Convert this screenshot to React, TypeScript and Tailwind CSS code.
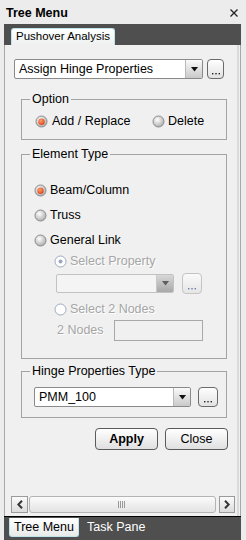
import React, { useId } from "react";

function Radio({ checked = false, disabled = false }: { checked?: boolean; disabled?: boolean }) {
  const id = useId().replace(/:/g, "");
  if (disabled) {
    return (
      <svg width="13" height="13" viewBox="0 0 13 13" className="shrink-0">
        <circle cx="6.5" cy="6.5" r="5.5" fill="#ffffff" stroke="#9ca8bf" strokeWidth="1" />
        {checked && <circle cx="6.5" cy="6.5" r="2" fill="#9aa6bd" />}
      </svg>
    );
  }
  return (
    <svg width="13" height="13" viewBox="0 0 13 13" className="shrink-0">
      <defs>
        <radialGradient id={`g${id}`} cx="40%" cy="35%" r="70%">
          <stop offset="0%" stopColor="#ffffff" />
          <stop offset="100%" stopColor="#a9a9a9" />
        </radialGradient>
        <radialGradient id={`o${id}`} cx="40%" cy="35%" r="70%">
          <stop offset="0%" stopColor="#ffa070" />
          <stop offset="100%" stopColor="#dc3f12" />
        </radialGradient>
      </defs>
      <circle cx="6.5" cy="6.5" r="5.5" fill={`url(#g${id})`} stroke="#8c8c8c" strokeWidth="1" />
      {checked && <circle cx="6.5" cy="6.8" r="3.2" fill={`url(#o${id})`} />}
    </svg>
  );
}

function Arrow({ disabled = false }: { disabled?: boolean }) {
  return (
    <div
      className={`w-[17px] h-full flex items-center justify-center border-l ${
        disabled ? "border-[#c8c8c8] bg-gradient-to-b from-[#d8d8d8] to-[#a8a8a8]" : "border-[#b9b9b9] bg-gradient-to-b from-[#fafafa] to-[#c9c9c9]"
      }`}
    >
      <svg width="7" height="5" viewBox="0 0 7 5">
        <path d="M0 0H7L3.5 4.5Z" fill={disabled ? "#5e5e5e" : "#111"} />
      </svg>
    </div>
  );
}

function Dots({ w, h, disabled = false }: { w: string; h: string; disabled?: boolean }) {
  return (
    <div
      className={`${w} ${h} rounded-[4px] border flex items-end justify-center pb-[3px] ${
        disabled
          ? "border-[#c4c4c4] bg-gradient-to-b from-[#fafafa] to-[#e6e6e6]"
          : "border-[#6a6a6a] bg-gradient-to-b from-[#ffffff] to-[#e2e2e2]"
      }`}
    >
      <svg width="8" height="2" viewBox="0 0 8 2">
        <rect x="0" y="0" width="1.4" height="1.4" fill={disabled ? "#6c7ba0" : "#222"} />
        <rect x="3.3" y="0" width="1.4" height="1.4" fill={disabled ? "#6c7ba0" : "#222"} />
        <rect x="6.6" y="0" width="1.4" height="1.4" fill={disabled ? "#6c7ba0" : "#222"} />
      </svg>
    </div>
  );
}

function Group({ label, className, children }: { label: string; className: string; children: React.ReactNode }) {
  return (
    <div className={`relative ml-[16px] w-[206px] border border-[#a3a3a3] ${className}`}>
      <span className="absolute left-[8px] top-[-9px] bg-[#f0f0f0] px-[2px] leading-[16px]">{label}</span>
      {children}
    </div>
  );
}

const dis = "text-[#a6a6a6] [text-shadow:1px_1px_0_#ffffff]";

export default function App() {
  return (
    <div className="w-[246px] h-[540px] bg-[#ececec] flex flex-col overflow-hidden text-black font-['Liberation_Sans',Arial,sans-serif] text-[12.5px] leading-none">
      {/* title */}
      <div className="h-[24px] shrink-0 flex items-center justify-between pl-[6px] pr-[8px] pt-[2px]">
        <span className="font-bold text-[12.5px]">Tree Menu</span>
        <svg width="8" height="8" viewBox="0 0 8 8">
          <path d="M0.5 0.5L7.5 7.5M7.5 0.5L0.5 7.5" stroke="#222" strokeWidth="1.3" />
        </svg>
      </div>

      <div className="ml-[4px] mr-[5px] flex-1 flex flex-col min-h-0">
        {/* top tab strip */}
        <div className="h-[21px] shrink-0 bg-[#4f4f4f] flex items-end pl-[7px]">
          <div className="h-[17px] px-[4px] flex items-center rounded-t-[3px] border border-b-0 border-[#bfe3ec] bg-gradient-to-b from-[#ffffff] to-[#eef0f0] text-[11.5px]">
            Pushover Analysis
          </div>
        </div>

        {/* content */}
        <div className="flex-1 bg-[#f0f0f0] border-x border-[#a8a8a8] flex flex-col min-h-0">
          <div className="flex-1 flex flex-col border-r-[2px] border-[#dadada] mr-[1px]">
            {/* main combo */}
            <div className="mt-[14px] ml-[9px] flex items-center gap-[4px]">
              <div className="w-[189px] h-[20px] bg-white border border-[#8a8a8a] rounded-[2px] flex items-stretch overflow-hidden">
                <div className="flex-1 flex items-center pl-[4px]">Assign Hinge Properties</div>
                <Arrow />
              </div>
              <Dots w="w-[17px]" h="h-[20px]" />
            </div>

            {/* Option */}
            <Group label="Option" className="mt-[20px] h-[41px]">
              <div className="flex items-center pl-[13px] pt-[15px]">
                <div className="w-[117px] flex items-center gap-[4px]">
                  <Radio checked />
                  <span>Add / Replace</span>
                </div>
                <div className="flex items-center gap-[3px]">
                  <Radio />
                  <span>Delete</span>
                </div>
              </div>
            </Group>

            {/* Element Type */}
            <Group label="Element Type" className="mt-[14px] h-[205px]">
              <div className="flex flex-col pl-[12px] pt-[29px]">
                <div className="h-[13px] flex items-center gap-[3px]">
                  <Radio checked />
                  <span>Beam/Column</span>
                </div>
                <div className="h-[13px] mt-[12px] flex items-center gap-[3px]">
                  <Radio />
                  <span>Truss</span>
                </div>
                <div className="h-[13px] mt-[12px] flex items-center gap-[3px]">
                  <Radio />
                  <span>General Link</span>
                </div>
                <div className={`h-[13px] mt-[8px] ml-[20px] flex items-center gap-[3px] ${dis}`}>
                  <Radio disabled checked />
                  <span>Select Property</span>
                </div>
                <div className="mt-[5px] ml-[22px] flex items-center gap-[8px]">
                  <div className="w-[118px] h-[19px] bg-[#f4f4f4] border border-[#c2c2c2] rounded-[2px] flex items-stretch overflow-hidden">
                    <div className="flex-1" />
                    <Arrow disabled />
                  </div>
                  <Dots w="w-[20px]" h="h-[21px]" disabled />
                </div>
                <div className={`h-[13px] mt-[9px] ml-[20px] flex items-center gap-[3px] ${dis}`}>
                  <Radio disabled />
                  <span>Select 2 Nodes</span>
                </div>
                <div className="mt-[4px] ml-[23px] flex items-center">
                  <span className={`w-[57px] ${dis}`}>2 Nodes</span>
                  <div className="w-[89px] h-[21px] border border-[#a8a8a8] bg-[#f0f0f0]" />
                </div>
              </div>
            </Group>

            {/* Hinge Properties Type */}
            <Group label="Hinge Properties Type" className="mt-[12px] h-[47px]">
              <div className="flex items-center pl-[12px] pt-[15px] gap-[7px]">
                <div className="w-[157px] h-[20px] bg-white border border-[#8a8a8a] rounded-[2px] flex items-stretch overflow-hidden">
                  <div className="flex-1 flex items-center pl-[4px]">PMM_100</div>
                  <Arrow />
                </div>
                <Dots w="w-[20px]" h="h-[20px]" />
              </div>
            </Group>

            {/* Buttons */}
            <div className="mt-[10px] ml-[90px] flex gap-[7px]">
              <div className="w-[63px] h-[22px] rounded-[4px] border border-[#5a5a5a] bg-gradient-to-b from-[#ffffff] to-[#e0e0e0] flex items-center justify-center font-bold">
                Apply
              </div>
              <div className="w-[63px] h-[22px] rounded-[4px] border border-[#5a5a5a] bg-gradient-to-b from-[#ffffff] to-[#e0e0e0] flex items-center justify-center">
                Close
              </div>
            </div>

            <div className="flex-1" />

            {/* Scrollbar */}
            <div className="mb-[3px] ml-[6px] w-[224px] h-[17px] flex items-stretch gap-[1px]">
              <div className="w-[17px] border border-[#9a9a9a] bg-gradient-to-b from-[#fbfbfb] to-[#dcdcdc] flex items-center justify-center">
                <svg width="6" height="9" viewBox="0 0 6 9">
                  <path d="M5 0.8L1.3 4.5L5 8.2" fill="none" stroke="#333" strokeWidth="2" />
                </svg>
              </div>
              <div className="flex-1 border border-[#b4b4b4] rounded-[3px] bg-gradient-to-b from-[#fbfbfb] to-[#e3e3e3] flex items-center justify-center mr-[2px]">
                <svg width="9" height="7" viewBox="0 0 9 7">
                  <path d="M0.5 0V7M2.5 0V7M4.5 0V7M6.5 0V7" stroke="#9a9a9a" strokeWidth="1" />
                </svg>
              </div>
              <div className="w-[16px] border border-[#9a9a9a] bg-gradient-to-b from-[#fbfbfb] to-[#dcdcdc] flex items-center justify-center">
                <svg width="6" height="9" viewBox="0 0 6 9">
                  <path d="M1 0.8L4.7 4.5L1 8.2" fill="none" stroke="#333" strokeWidth="2" />
                </svg>
              </div>
            </div>
          </div>
        </div>

        {/* bottom tab strip */}
        <div className="h-[24px] shrink-0 border-t border-black bg-[#4f4f4f] flex items-start pl-[5px] pt-[1px]">
          <div className="h-[19px] px-[4px] flex items-center rounded-b-[3px] border border-t-0 border-[#bfe3ec] bg-gradient-to-b from-[#ffffff] to-[#e8eaea] text-[12.5px]">
            Tree Menu
          </div>
          <span className="ml-[8px] h-[19px] flex items-center text-white">Task Pane</span>
        </div>
      </div>
    </div>
  );
}
